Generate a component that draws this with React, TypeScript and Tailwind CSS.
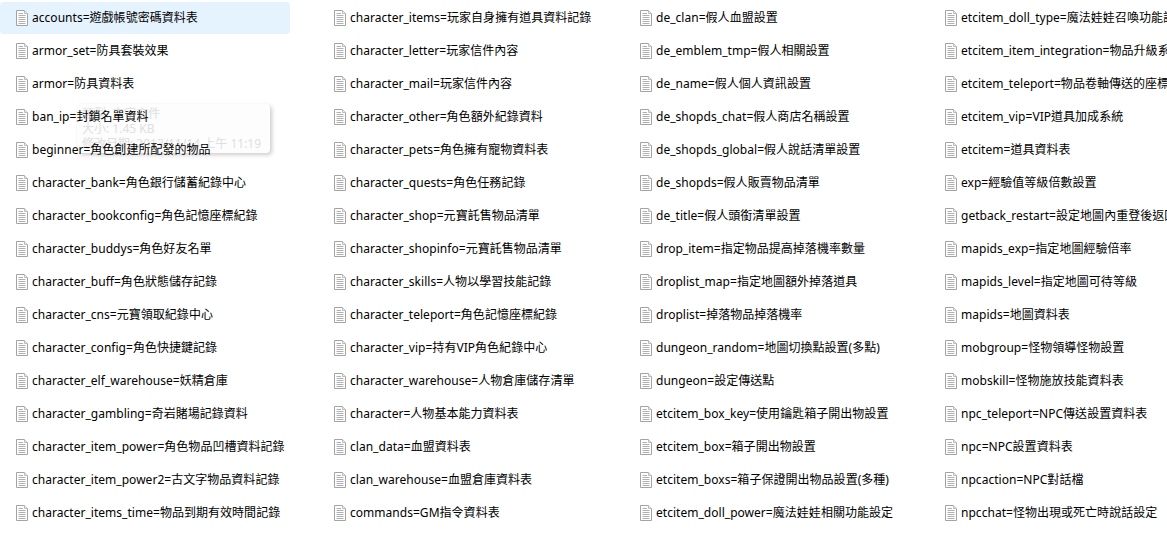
const columns: string[][] = [
  [
    'accounts=遊戲帳號密碼資料表',
    'armor_set=防具套裝效果',
    'armor=防具資料表',
    'ban_ip=封鎖名單資料',
    'beginner=角色創建所配發的物品',
    'character_bank=角色銀行儲蓄紀錄中心',
    'character_bookconfig=角色記憶座標紀錄',
    'character_buddys=角色好友名單',
    'character_buff=角色狀態儲存記錄',
    'character_cns=元寶領取紀錄中心',
    'character_config=角色快捷鍵記錄',
    'character_elf_warehouse=妖精倉庫',
    'character_gambling=奇岩賭場記錄資料',
    'character_item_power=角色物品凹槽資料記錄',
    'character_item_power2=古文字物品資料記錄',
    'character_items_time=物品到期有效時間記錄',
  ],
  [
    'character_items=玩家自身擁有道具資料記錄',
    'character_letter=玩家信件內容',
    'character_mail=玩家信件內容',
    'character_other=角色額外紀錄資料',
    'character_pets=角色擁有寵物資料表',
    'character_quests=角色任務記錄',
    'character_shop=元寶託售物品清單',
    'character_shopinfo=元寶託售物品清單',
    'character_skills=人物以學習技能記錄',
    'character_teleport=角色記憶座標紀錄',
    'character_vip=持有VIP角色紀錄中心',
    'character_warehouse=人物倉庫儲存清單',
    'character=人物基本能力資料表',
    'clan_data=血盟資料表',
    'clan_warehouse=血盟倉庫資料表',
    'commands=GM指令資料表',
  ],
  [
    'de_clan=假人血盟設置',
    'de_emblem_tmp=假人相關設置',
    'de_name=假人個人資訊設置',
    'de_shopds_chat=假人商店名稱設置',
    'de_shopds_global=假人說話清單設置',
    'de_shopds=假人販賣物品清單',
    'de_title=假人頭銜清單設置',
    'drop_item=指定物品提高掉落機率數量',
    'droplist_map=指定地圖額外掉落道具',
    'droplist=掉落物品掉落機率',
    'dungeon_random=地圖切換點設置(多點)',
    'dungeon=設定傳送點',
    'etcitem_box_key=使用鑰匙箱子開出物設置',
    'etcitem_box=箱子開出物設置',
    'etcitem_boxs=箱子保證開出物品設置(多種)',
    'etcitem_doll_power=魔法娃娃相關功能設定',
  ],
  [
    'etcitem_doll_type=魔法娃娃召喚功能設定',
    'etcitem_item_integration=物品升級系統',
    'etcitem_teleport=物品卷軸傳送的座標',
    'etcitem_vip=VIP道具加成系統',
    'etcitem=道具資料表',
    'exp=經驗值等級倍數設置',
    'getback_restart=設定地圖內重登後返回',
    'mapids_exp=指定地圖經驗倍率',
    'mapids_level=指定地圖可待等級',
    'mapids=地圖資料表',
    'mobgroup=怪物領導怪物設置',
    'mobskill=怪物施放技能資料表',
    'npc_teleport=NPC傳送設置資料表',
    'npc=NPC設置資料表',
    'npcaction=NPC對話檔',
    'npcchat=怪物出現或死亡時說話設定',
  ],
]

function FileIcon() {
  return (
    <svg width="12" height="16" viewBox="0 0 12 16" className="shrink-0">
      <path d="M0.5 0.5H8.5L11.5 3.5V15.5H0.5Z" fill="#fff" stroke="#a3a3a3" />
      <path d="M8.5 0.5V3.5H11.5" fill="#ececec" stroke="#bdbdbd" />
      <path
        d="M2.5 3.5H7M2.5 5.5H9.5M2.5 7.5H9.5M2.5 9.5H9.5M2.5 11.5H9.5M2.5 13.5H9.5"
        stroke="#b0b0b0"
      />
    </svg>
  )
}

function FileRow({ label, selected }: { label: string; selected?: boolean }) {
  return (
    <div
      className={
        selected
          ? 'flex h-8 w-[290px] items-center gap-1 rounded-sm bg-[#e5f3ff] pl-4'
          : 'flex h-8 w-[290px] items-center gap-1 pl-4'
      }
    >
      <FileIcon />
      <span className="whitespace-nowrap text-xs tracking-[0.03px] text-black">{label}</span>
    </div>
  )
}

export default function App() {
  return (
    <div className="relative h-[540px] w-[1167px] overflow-hidden bg-white pt-0.5 font-['Noto_Sans','Noto_Sans_CJK_TC',sans-serif]">
      <div className="relative z-10 grid grid-cols-[318px_306px_305px_306px]">
        {columns.map((col, i) => (
          <div key={i} className="flex flex-col gap-px">
            {col.map((label, j) => (
              <FileRow key={label} label={label} selected={i === 0 && j === 0} />
            ))}
          </div>
        ))}
      </div>

      {/* tooltip fading out, sits under the row text */}
      <div className="absolute left-[77px] top-[104px] z-0 h-[49px] w-[193px] rounded-sm bg-[#fdfdfd] pl-[5px] pt-[2px] text-xs leading-[15px] text-[#e0e0e0] shadow-[2px_2px_4px_rgba(0,0,0,0.2)]">
        <div>類型: 文字文件</div>
        <div>大小: 1.45 KB</div>
        <div className="whitespace-nowrap">修改日期: 2013/11/14 上午 11:19</div>
      </div>
    </div>
  )
}
